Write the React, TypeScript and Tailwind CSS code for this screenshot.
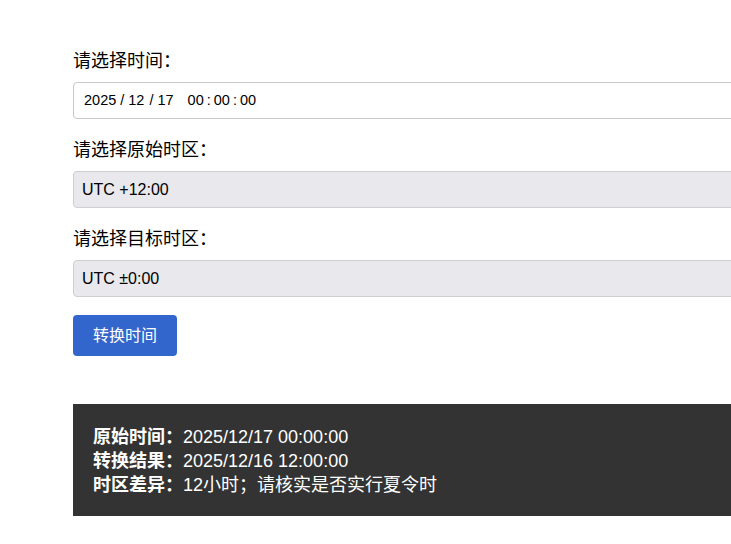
export default function App() {
  return (
    <div className="h-[544px] w-full overflow-hidden bg-white font-['Liberation_Sans','Noto_Sans_CJK_SC',sans-serif] text-black">
      <div className="w-[760px] pl-[73px] pt-[49px]">
        {/* 时间 */}
        <div className="text-[18px] leading-6">请选择时间：</div>
        <div className="mt-[9px] flex h-[37px] items-center rounded border border-[#c8c8c8] bg-white pl-[10px] text-[14.5px] text-black">
          <span>2025</span>
          <span className="ml-[4px]">/</span>
          <span className="ml-[4px]">12</span>
          <span className="ml-[5px]">/</span>
          <span className="ml-[4px]">17</span>
          <span className="ml-[14px]">00</span>
          <span className="ml-[3px]">:</span>
          <span className="ml-[3px]">00</span>
          <span className="ml-[3px]">:</span>
          <span className="ml-[3px]">00</span>
        </div>

        {/* 原始时区 */}
        <div className="mt-[19px] text-[18px] leading-6">请选择原始时区：</div>
        <div className="mt-[9px] flex h-[37px] items-center rounded border border-[#cfcfd3] bg-[#e8e8ed] px-[8px] text-base">
          UTC +12:00
        </div>

        {/* 目标时区 */}
        <div className="mt-[19px] text-[18px] leading-6">请选择目标时区：</div>
        <div className="mt-[9px] flex h-[37px] items-center rounded border border-[#cfcfd3] bg-[#e8e8ed] px-[8px] text-base">
          UTC ±0:00
        </div>

        <button className="mt-[18px] h-[41px] w-[104px] rounded bg-[#3366cc] text-base text-white">
          转换时间
        </button>

        {/* 结果 */}
        <div className="mt-[48px] h-[112px] bg-[#333333] px-[20px] pt-[21px] text-[18px] leading-6 text-white">
          <div>
            <span className="font-bold">原始时间：</span>2025/12/17 00:00:00
          </div>
          <div>
            <span className="font-bold">转换结果：</span>2025/12/16 12:00:00
          </div>
          <div>
            <span className="font-bold">时区差异：</span>12小时；请核实是否实行夏令时
          </div>
        </div>
      </div>
    </div>
  );
}
